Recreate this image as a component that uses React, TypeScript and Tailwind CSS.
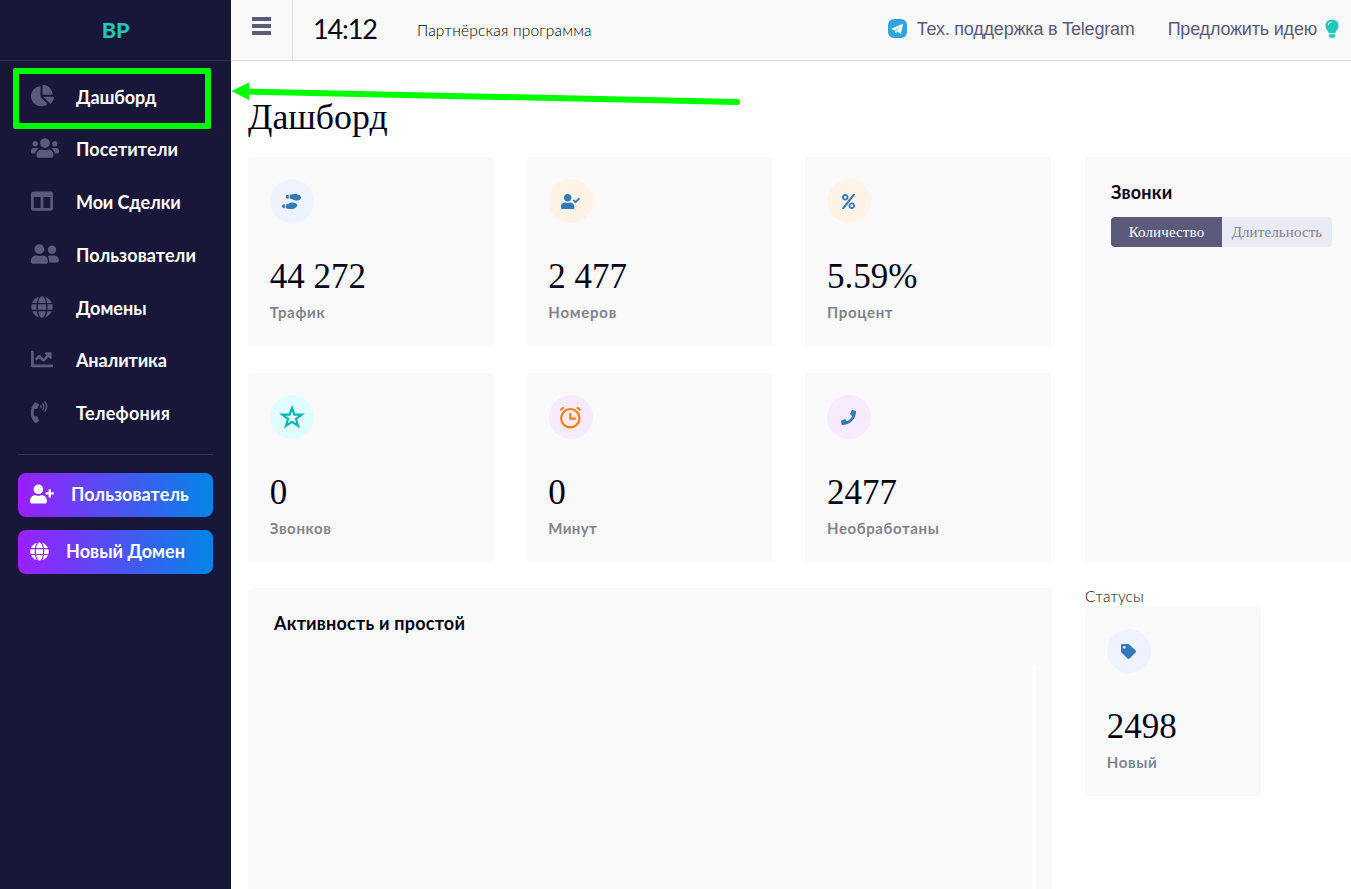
import type { ReactNode } from "react";
import {
  FaChartPie, FaUsers, FaColumns, FaUserFriends, FaGlobe, FaChartLine, FaPhoneVolume,
  FaUserPlus, FaShoePrints, FaUserCheck, FaPercent, FaPhone, FaTag,
} from "react-icons/fa";

const StarIcon = () => (
  <svg width="26" height="26" viewBox="0 0 26 26" fill="none" stroke="#06b8b0" strokeWidth="2.2">
    <path d="M13 4l2.400 6.600h7.300l-5.700 4.400 2.100 6.900-6.100-4-6.100 4 2.100-6.900-5.700-4.400h7.300z" />
  </svg>
);

const AlarmIcon = () => (
  <svg width="24" height="24" viewBox="0 0 24 24" fill="none" stroke="#ff7a00" strokeWidth="2.100">
    <circle cx="12.300" cy="13.200" r="9.200" />
    <path d="M12.300 8v5.600h5.500M2.400 5.200l3.400-3M22.200 5.200l-3.400-3" />
  </svg>
);

const TelegramIcon = () => (
  <svg width="19" height="19" viewBox="0 0 19 19">
    <rect width="19" height="19" rx="6" fill="#2ca5e0" />
    <path d="M3.600 9.500L14.300 4.900c.5-.2.800.1.700.700l-2 8.600c-.1.500-.5.700-.9.400L9.300 12.600 8.100 13.900c-.2.200-.5.100-.6-.2L6.600 11.200l-2.900-.9c-.5-.2-.5-.600-.1-.8z" fill="#fff" />
    <path d="M7.200 11.300l5.300-4.200-4.200 4.800-.4 1.700z" fill="#7cc6ea" />
  </svg>
);

const BulbIcon = () => (
  <svg width="14" height="20" viewBox="0 0 14 20" fill="#1fc8b8">
    <path d="M7 .500C3.300.500.500 3.300.500 6.700c0 3.200 2.600 4.800 3.300 7.600h6.400c.7-2.800 3.300-4.400 3.300-7.600C13.500 3.300 10.700.500 7 .500z" />
    <path d="M3.800 15.300h6.400v1.700l-1 1.800H4.800l-1-1.800z" />
    <path d="M3.300 6.500c0-2 1.400-3.400 3.500-3.500" fill="none" stroke="#c8f5ef" strokeWidth="1.100" />
  </svg>
);

const menu = [
  { label: "Дашборд", icon: <FaChartPie size={23} />, text: "tracking-[-0.1px]" },
  { label: "Посетители", icon: <FaUsers size={28} />, text: "tracking-[0.1px]" },
  { label: "Мои Сделки", icon: <FaColumns size={22} />, text: "tracking-[-0.1px]" },
  { label: "Пользователи", icon: <FaUserFriends size={28} />, text: "tracking-[0.08px]" },
  { label: "Домены", icon: <FaGlobe size={22} />, text: "" },
  { label: "Аналитика", icon: <FaChartLine size={22} />, text: "tracking-[-0.1px]" },
  { label: "Телефония", icon: <FaPhoneVolume size={22} className="-ml-[3px]" />, text: "tracking-[0.25px]" },
];

function StatCard({ icon, tint, value, label, labelClass }: {
  icon: ReactNode; tint: string; value: string; label: string; labelClass: string;
}) {
  return (
    <div className="h-[189px] rounded-[4px] bg-[#f9f9f9] px-[22px] pt-[22px]">
      <div className={`flex size-11 items-center justify-center rounded-full pr-px text-[#337ab7] ${tint}`}>{icon}</div>
      <div className="-ml-[0.3px] mt-[34px] h-10 whitespace-nowrap font-['Liberation_Serif',serif] text-[35px] leading-10 text-[#030117]">{value}</div>
      <div className={`-ml-[0.3px] mt-[5px] h-5 whitespace-nowrap text-[15px] font-bold leading-5 text-[#83838f] ${labelClass}`}>{label}</div>
    </div>
  );
}

export default function App() {
  return (
    <div className="relative flex h-[889px] w-[1351px] overflow-hidden bg-white font-['Lato',sans-serif] text-[#030117]">
      <aside className="flex w-[231px] shrink-0 flex-col bg-[#18173a]">
        <div className="flex h-[61px] items-center justify-center border-b border-[#2f2e50] text-[21.5px] font-black text-[#1fc8b8]">BP</div>
        <nav className="flex flex-col pt-[10px]">
          {menu.map((item) => (
            <a key={item.label} className="flex h-[52.8px] items-center pb-[1.8px] pl-[31px] text-[18px] font-bold leading-none text-white">
              <span className="flex w-[45px] shrink-0 pb-[2px] text-[#5b5a7b]">{item.icon}</span>
              <span className={`whitespace-nowrap ${item.text}`}>{item.label}</span>
            </a>
          ))}
        </nav>
        <div className="mx-[18px] mt-[13px] border-t border-[#34334f]" />
        <div className="mx-[18px] mt-[18px] flex flex-col gap-[13px] text-[18px] font-bold text-white">
          <button className="flex h-11 items-center rounded-lg bg-linear-to-r/srgb from-[#9a1fff] to-[#0385e6] pb-px pl-3">
            <FaUserPlus size={24} />
            <span className="ml-[17px] tracking-[0.05px]">Пользователь</span>
          </button>
          <button className="flex h-11 items-center rounded-lg bg-linear-to-r/srgb from-[#9a1fff] to-[#0385e6] pb-px pl-3">
            <FaGlobe size={19} />
            <span className="ml-[17px] tracking-[0.05px]">Новый Домен</span>
          </button>
        </div>
      </aside>

      <div className="flex min-w-0 flex-1 flex-col">
        <header className="flex h-[61px] shrink-0 items-center border-b border-[#dcdce4] bg-[#f9f9f9]">
          <div className="flex h-full w-[62px] shrink-0 flex-col gap-[3px] border-r border-[#dcdce4] pl-[21px] pt-[17px]">
            <span className="h-1 w-[19px] bg-[#5b5a7b]" />
            <span className="h-1 w-[19px] bg-[#5b5a7b]" />
            <span className="h-1 w-[19px] bg-[#5b5a7b]" />
          </div>
          <div className="ml-[20px] w-[104px] pb-[4px] text-[27px] leading-none tracking-[-1.1px]">14:12</div>
          <div className="whitespace-nowrap pt-[2px] text-[15.5px] font-light leading-none tracking-[0.2px] text-black">Партнёрская программа</div>
          <div className="ml-auto flex items-center whitespace-nowrap pb-[3px] pr-[12px] font-['Liberation_Sans',sans-serif] text-[18px] leading-none tracking-[-0.2px] text-[#5b5a7b]">
            <TelegramIcon />
            <span className="ml-[10px]">Тех. поддержка в Telegram</span>
            <span className="ml-[33px] mr-[8px]">Предложить идею</span>
            <BulbIcon />
          </div>
        </header>

        <main className="flex flex-1 flex-col pl-[17px]">
          <h1 className="mt-[36px] h-[60px] font-['Liberation_Serif',serif] text-[35.8px] leading-[41px]">Дашборд</h1>
          <div className="flex gap-[33px]">
            <div className="flex w-[804px] shrink-0 flex-col gap-[26px]">
              <div className="grid w-[803px] grid-cols-3 gap-x-[33px] gap-y-[27px]">
                <StatCard icon={<FaShoePrints size={19} />} tint="bg-[#eef3ff]" value="44 272" label="Трафик" labelClass="tracking-[0.7px]" />
                <StatCard icon={<FaUserCheck size={19} />} tint="bg-[#fff2e6]" value="2 477" label="Номеров" labelClass="tracking-[0.75px]" />
                <StatCard icon={<FaPercent size={15} />} tint="bg-[#fff2e6]" value="5.59%" label="Процент" labelClass="tracking-[0.65px]" />
                <StatCard icon={<StarIcon />} tint="bg-[#e0feff]" value="0" label="Звонков" labelClass="tracking-[0.65px]" />
                <StatCard icon={<AlarmIcon />} tint="bg-[#f6ebff]" value="0" label="Минут" labelClass="tracking-[0.35px]" />
                <StatCard icon={<FaPhone size={15} />} tint="bg-[#f6ebff]" value="2477" label="Необработаны" labelClass="tracking-[0.6px]" />
              </div>
              <section className="flex h-[301px] justify-between rounded-t-[4px] bg-[#f9f9f9] pl-[26px] pr-4">
                <h2 className="mt-[25px] text-[18px] font-bold leading-5 tracking-[0.22px]">Активность и простой</h2>
                <div className="mt-[77px] w-1 bg-white" />
              </section>
            </div>
            <div className="flex min-w-0 flex-1 flex-col">
              <section className="h-[405px] rounded-l-[4px] bg-[#f9f9f9] pl-[26px] pt-[25px]">
                <h2 className="text-[18px] font-bold leading-5 tracking-[0.2px]">Звонки</h2>
                <div className="mt-[15px] flex h-[30px] w-[221px] overflow-hidden rounded-[4px] font-['Liberation_Serif',serif] text-[15px] leading-[31px] tracking-[0.12px]">
                  <span className="w-[111px] bg-[#5b5a7b] text-center text-white">Количество</span>
                  <span className="w-[110px] bg-[#eae9f6] text-center text-[#83838f]">Длительность</span>
                </div>
              </section>
              <div className="mt-[24px] mb-px h-5 text-[15.5px] font-light leading-5 tracking-[0.05px] text-[#0c0b15]">Статусы</div>
              <div className="w-[176px]">
                <StatCard icon={<FaTag size={15} />} tint="bg-[#eef3ff]" value="2498" label="Новый" labelClass="tracking-[0.7px]" />
              </div>
            </div>
          </div>
        </main>
      </div>

      <div className="absolute left-[13px] top-[68px] h-[61px] w-[198px] rounded-[2px] border-[6px] border-[#00ff00]" />
      <svg className="absolute left-[231px] top-[80px]" width="512" height="30" fill="#00ff00">
        <path d="M0.500 11L18 2.500V20z" />
        <path d="M16 11.500L506 22" stroke="#00ff00" strokeWidth="6" strokeLinecap="round" />
      </svg>
    </div>
  );
}
